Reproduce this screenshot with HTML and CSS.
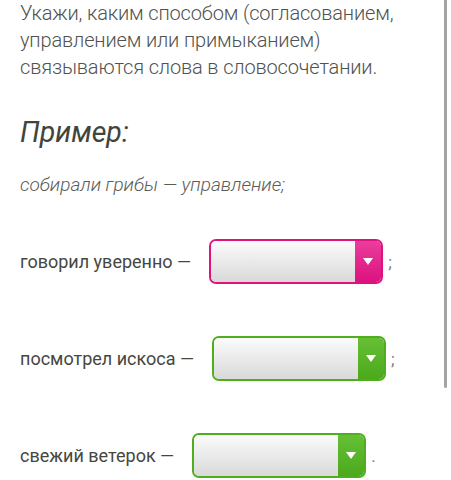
FILE: index.html
```html
<!DOCTYPE html>
<html lang="ru">
<head>
    <meta charset="UTF-8">
    <meta name="viewport" content="width=device-width, initial-scale=1.0">
    <title>Виды связи в словосочетании</title>
    <link rel="stylesheet" href="styles.css">
</head>
<body>
    <div class="task">
        <p class="prompt">Укажи, каким способом (согласованием, управлением или примыканием) связываются слова в словосочетании.</p>

        <h2 class="example-title">Пример:</h2>
        <p class="example">собирали грибы — управление;</p>

        <div class="row">
            <span class="phrase">говорил уверенно —</span>
            <div class="select pink">
                <span class="field"></span>
                <span class="arrow"></span>
            </div>
            <span class="punct">;</span>
        </div>

        <div class="row">
            <span class="phrase">посмотрел искоса —</span>
            <div class="select green">
                <span class="field"></span>
                <span class="arrow"></span>
            </div>
            <span class="punct">;</span>
        </div>

        <div class="row">
            <span class="phrase">свежий ветерок —</span>
            <div class="select green">
                <span class="field"></span>
                <span class="arrow"></span>
            </div>
            <span class="punct">.</span>
        </div>
    </div>

    <div class="scroll-thumb"></div>
</body>
</html>
```

FILE: styles.css
```css
/* Base */
* {
    box-sizing: border-box;
    margin: 0;
    padding: 0;
}

body {
    font-family: Roboto, "Noto Sans", sans-serif;
    font-size: 20px;
    line-height: 28px;
    background: #fff;
    color: #4b4d47;
    overflow: hidden;
}

.task {
    padding: 0 20px;
}

/* Text */
.prompt {
    font-weight: 300;
    line-height: 27px;
    color: #505250;
    letter-spacing: -0.15px;
    width: 400px;
}

.example-title {
    font-size: 28.5px;
    line-height: 34px;
    font-style: italic;
    font-weight: 400;
    color: #41453b;
    margin-top: 35px;
}

.example {
    font-size: 19px;
    font-style: italic;
    font-weight: 300;
    color: #5a5c58;
    margin-top: 21px;
    margin-bottom: 40px;
}

/* Answer rows */
.row {
    display: flex;
    align-items: center;
    height: 45px;
    margin-bottom: 52px;
}

.phrase {
    font-size: 18px;
    color: #45473f;
    margin-right: 18px;
}

.punct {
    margin-left: 5px;
    color: #777;
    font-size: 17px;
}

.select {
    display: flex;
    width: 174px;
    height: 45px;
    border: 2px solid;
    border-radius: 7px;
    overflow: hidden;
}

.select .field {
    flex: 1;
    background: linear-gradient(#fbfbfb, #d9d9d9);
}

.select .arrow {
    width: 26px;
    display: flex;
    align-items: center;
    justify-content: center;
}

.select .arrow::after {
    content: "";
    border-left: 5px solid transparent;
    border-right: 5px solid transparent;
    border-top: 7px solid #fff;
}

.select.pink {
    border-color: #e0137e;
}

.select.pink .arrow {
    background: linear-gradient(#ea3e9c, #dc1280);
}

.select.green {
    border-color: #4fae1d;
}

.select.green .arrow {
    background: linear-gradient(#66bf35, #4ca91c);
}

/* Mobile scroll indicator */
.scroll-thumb {
    position: absolute;
    top: 0;
    left: 444px;
    width: 3px;
    height: 388px;
    background: #a3a3a3;
    border-radius: 0 0 2px 2px;
}
```
